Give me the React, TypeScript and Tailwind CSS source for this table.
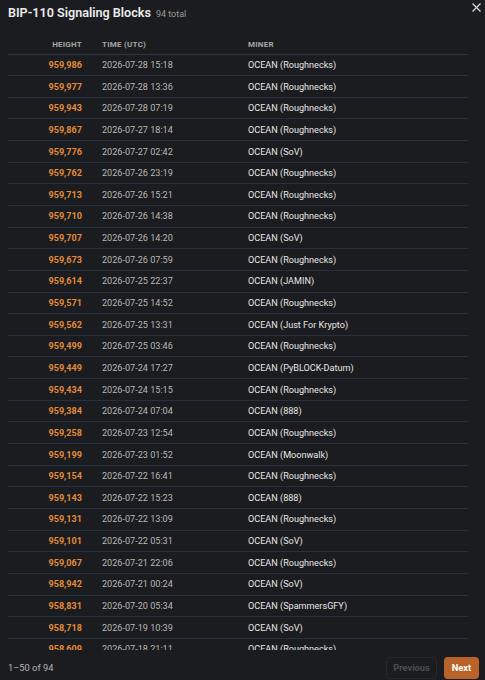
const rows: [string, string, string][] = [
  ["959,986", "2026-07-28 15:18", "OCEAN (Roughnecks)"],
  ["959,977", "2026-07-28 13:36", "OCEAN (Roughnecks)"],
  ["959,943", "2026-07-28 07:19", "OCEAN (Roughnecks)"],
  ["959,867", "2026-07-27 18:14", "OCEAN (Roughnecks)"],
  ["959,776", "2026-07-27 02:42", "OCEAN (SoV)"],
  ["959,762", "2026-07-26 23:19", "OCEAN (Roughnecks)"],
  ["959,713", "2026-07-26 15:21", "OCEAN (Roughnecks)"],
  ["959,710", "2026-07-26 14:38", "OCEAN (Roughnecks)"],
  ["959,707", "2026-07-26 14:20", "OCEAN (SoV)"],
  ["959,673", "2026-07-26 07:59", "OCEAN (Roughnecks)"],
  ["959,614", "2026-07-25 22:37", "OCEAN (JAMIN)"],
  ["959,571", "2026-07-25 14:52", "OCEAN (Roughnecks)"],
  ["959,562", "2026-07-25 13:31", "OCEAN (Just For Krypto)"],
  ["959,499", "2026-07-25 03:46", "OCEAN (Roughnecks)"],
  ["959,449", "2026-07-24 17:27", "OCEAN (PyBLOCK-Datum)"],
  ["959,434", "2026-07-24 15:15", "OCEAN (Roughnecks)"],
  ["959,384", "2026-07-24 07:04", "OCEAN (888)"],
  ["959,258", "2026-07-23 12:54", "OCEAN (Roughnecks)"],
  ["959,199", "2026-07-23 01:52", "OCEAN (Moonwalk)"],
  ["959,154", "2026-07-22 16:41", "OCEAN (Roughnecks)"],
  ["959,143", "2026-07-22 15:23", "OCEAN (888)"],
  ["959,131", "2026-07-22 13:09", "OCEAN (Roughnecks)"],
  ["959,101", "2026-07-22 05:31", "OCEAN (SoV)"],
  ["959,067", "2026-07-21 22:06", "OCEAN (Roughnecks)"],
  ["958,942", "2026-07-21 00:24", "OCEAN (SoV)"],
  ["958,831", "2026-07-20 05:34", "OCEAN (SpammersGFY)"],
  ["958,718", "2026-07-19 10:39", "OCEAN (SoV)"],
  ["958,609", "2026-07-18 21:11", "OCEAN (Roughnecks)"],
  ["958,577", "2026-07-18 16:02", "OCEAN (Roughnecks)"],
];

export default function App() {
  return (
    <div className="flex h-[680px] w-[485px] flex-col overflow-hidden bg-[#1b1c1f] font-['Roboto',sans-serif] text-[#e2e2e2]">
      <header className="flex h-[22px] shrink-0 items-start justify-between pl-2 pr-[4px] pt-[4px]">
        <div className="flex items-baseline gap-[5px]">
          <h2 className="text-[12.6px] leading-[18px] font-semibold text-[#ececec]">BIP-110 Signaling Blocks</h2>
          <span className="text-[9px] text-[#9a9a9a]">94 total</span>
        </div>
        <button className="mt-[-1px] text-[#d4d4d4]" aria-label="Close">
          <svg width="9" height="9" viewBox="0 0 9 9" fill="none" stroke="currentColor" strokeWidth="1.3">
            <path d="M0.5 0.5l8 8M8.5 0.5l-8 8" />
          </svg>
        </button>
      </header>

      <div className="mt-[14px] min-h-0 flex-1 overflow-hidden pl-2 pr-[17px]">
        <table className="w-full table-fixed border-collapse text-[9.1px]">
          <colgroup>
            <col className="w-[82px]" />
            <col className="w-[150px]" />
            <col />
          </colgroup>
          <thead>
            <tr className="h-[18px] border-b border-[#2c3442] text-[8px] uppercase tracking-[0.03em] text-[#a6a6a6]">
              <th className="pr-2 text-right font-bold">Height</th>
              <th className="pl-3 text-left font-bold">Time (UTC)</th>
              <th className="pl-2 text-left font-bold">Miner</th>
            </tr>
          </thead>
          <tbody>
            {rows.map(([h, t, m]) => (
              <tr key={h} className="h-[21.65px] border-b border-[#273040]">
                <td className="pr-2 pt-[2px] text-right font-bold text-[#e28b3b]">{h}</td>
                <td className="pl-3 pt-[2px] text-[#b8b8b8]">{t}</td>
                <td className="pl-2 pt-[2px] text-[#e6e6e6]">{m}</td>
              </tr>
            ))}
          </tbody>
        </table>
      </div>

      <footer className="flex h-[30px] shrink-0 items-start justify-between pl-2 pr-[6px] pt-[7px]">
        <span className="text-[9.3px] leading-[22px] text-[#b4b4b4]">1–50 of 94</span>
        <div className="flex gap-[7px]">
          <button className="h-[22px] w-[51px] rounded-[4px] border border-[#25282d] text-[9.3px] font-bold text-[#4a4d53]">
            Previous
          </button>
          <button className="h-[22px] w-[35px] rounded-[4px] bg-[#b9622a] text-[9.3px] font-bold text-white">
            Next
          </button>
        </div>
      </footer>
    </div>
  );
}
